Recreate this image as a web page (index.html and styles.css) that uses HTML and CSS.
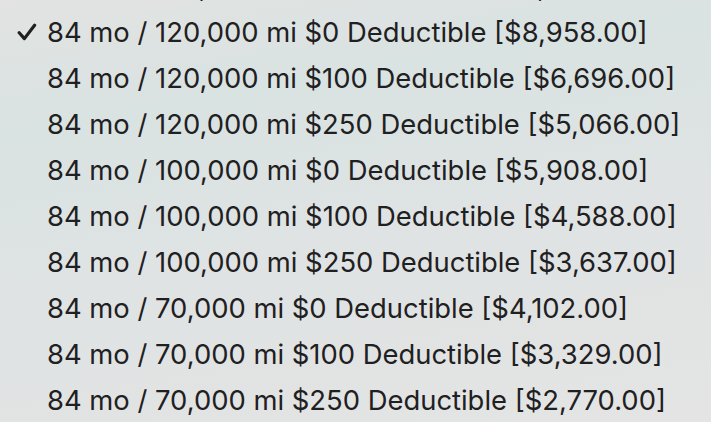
FILE: index.html
```html
<!DOCTYPE html>
<html>
<head>
<meta charset="utf-8">
<link rel="stylesheet" href="styles.css">
</head>
<body>
<div class="menu">
  <div class="item item-partial"><span class="check"></span><span class="label">84 mo / 125,000 mi $0 Deductible [$9,811.00]</span></div>
  <div class="item"><span class="check"><svg width="20" height="18" viewBox="0 0 20 18"><path d="M2.2 9.8 L7.4 15.6 L17.6 2.2" fill="none" stroke="#1f2020" stroke-width="3.2" stroke-linecap="round" stroke-linejoin="round"/></svg></span><span class="label">84 mo / 120,000 mi $0 Deductible [$8,958.00]</span></div>
  <div class="item"><span class="check"></span><span class="label">84 mo / 120,000 mi $100 Deductible [$6,696.00]</span></div>
  <div class="item"><span class="check"></span><span class="label">84 mo / 120,000 mi $250 Deductible [$5,066.00]</span></div>
  <div class="item"><span class="check"></span><span class="label">84 mo / 100,000 mi $0 Deductible [$5,908.00]</span></div>
  <div class="item"><span class="check"></span><span class="label">84 mo / 100,000 mi $100 Deductible [$4,588.00]</span></div>
  <div class="item"><span class="check"></span><span class="label">84 mo / 100,000 mi $250 Deductible [$3,637.00]</span></div>
  <div class="item"><span class="check"></span><span class="label">84 mo / 70,000 mi $0 Deductible [$4,102.00]</span></div>
  <div class="item"><span class="check"></span><span class="label">84 mo / 70,000 mi $100 Deductible [$3,329.00]</span></div>
  <div class="item"><span class="check"></span><span class="label">84 mo / 70,000 mi $250 Deductible [$2,770.00]</span></div>
</div>
</body>
</html>
```

FILE: styles.css
```css
html, body {
  margin: 0;
  padding: 0;
  width: 711px;
  height: 422px;
  overflow: hidden;
}
body {
  background: linear-gradient(170deg, #e2e3e2 0%, #d9e3e2 25%, #dfe3e3 55%, #e4e4e4 100%);
  font-family: Inter, "Noto Sans", sans-serif;
  color: #1f2021;
}
.menu {
  display: flex;
  flex-direction: column;
  padding-top: 9px;
}
.item {
  display: flex;
  align-items: center;
  height: 46px;
  font-size: 27.4px;
  line-height: 46px;
  white-space: nowrap;
}
.item-partial {
  margin-top: -46px;
}
.check {
  width: 47px;
  flex: none;
  display: flex;
  justify-content: flex-start;
  padding-left: 17px;
  box-sizing: border-box;
}
.check svg {
  display: block;
}
```
